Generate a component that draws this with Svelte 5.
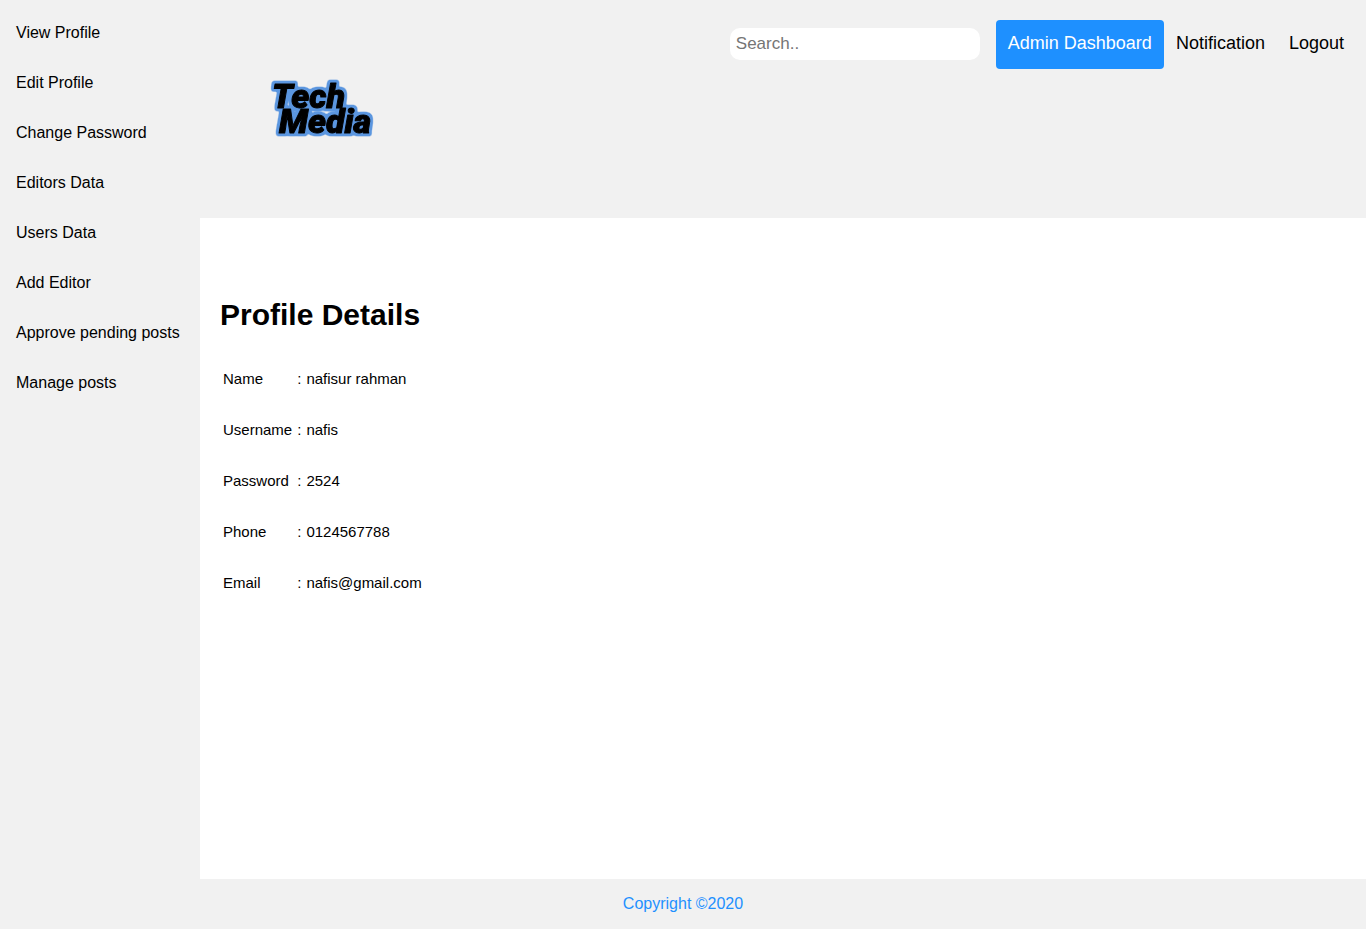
<script>
  const menu = [
    'View Profile',
    'Edit Profile',
    'Change Password',
    'Editors Data',
    'Users Data',
    'Add Editor',
    'Approve pending posts',
    'Manage posts'
  ];

  const details = [
    ['Name', 'nafisur rahman'],
    ['Username', 'nafis'],
    ['Password', '2524'],
    ['Phone', '0124567788'],
    ['Email', 'nafis@gmail.com']
  ];
</script>

<div class="page">
  <nav class="sidebar" aria-label="Profile">
    {#each menu as item}
      <a href="#top">{item}</a>
    {/each}
  </nav>

  <div class="content">
    <header>
      <a class="logo" href="#top">
        <svg width="128" height="76" viewBox="0 0 128 76">
          <defs>
            <!-- Rounded blue rim: blurred alpha, sharpened, laid under the letters -->
            <filter id="rim" x="-10%" y="-20%" width="120%" height="140%" color-interpolation-filters="sRGB">
              <feMorphology in="SourceAlpha" operator="dilate" radius="2" result="wide" />
              <feGaussianBlur in="wide" stdDeviation="1" result="soft" />
              <feComponentTransfer in="soft" result="shape">
                <feFuncA type="linear" slope="3" intercept="-0.3" />
              </feComponentTransfer>
              <feFlood flood-color="#5b96df" />
              <feComposite in2="shape" operator="in" result="blue" />
              <feMerge>
                <feMergeNode in="blue" />
                <feMergeNode in="SourceGraphic" />
              </feMerge>
            </filter>
          </defs>
          <g filter="url(#rim)">
            <text x="12" y="38">Tech</text>
            <text x="19" y="63">Media</text>
          </g>
        </svg>
      </a>
      <div class="actions">
        <input type="text" placeholder="Search.." aria-label="Search" />
        <a class="active" href="#top">Admin Dashboard</a>
        <a href="#top">Notification</a>
        <a href="#top">Logout</a>
      </div>
    </header>

    <main>
      <h1>Profile Details</h1>
      <table>
        <tbody>
          {#each details as [label, value]}
            <tr>
              <th scope="row">{label}</th>
              <td>:</td>
              <td>{value}</td>
            </tr>
          {/each}
        </tbody>
      </table>
    </main>
  </div>

  <footer>Copyright ©2020</footer>
</div>

<style>
  :global(body) {
    margin: 0;
    background: #fff;
  }

  .page {
    display: grid;
    grid-template-columns: 200px 1fr;
    grid-template-rows: 1fr auto;
    min-height: 100vh;
    color: #000;
    font-family: 'Liberation Sans', Arial, sans-serif;
    font-size: 16px;
  }

  a {
    color: #000;
    text-decoration: none;
  }

  .sidebar {
    padding-top: 8px;
    background: #f1f1f1;
  }

  .sidebar a {
    display: block;
    padding: 16px;
    line-height: 18px;
    white-space: nowrap;
  }

  header {
    box-sizing: border-box;
    display: flex;
    justify-content: space-between;
    align-items: flex-start;
    min-height: 218px;
    padding: 20px 10px;
    background: #f1f1f1;
  }

  .logo {
    margin: 50px;
  }

  .logo svg {
    display: block;
  }

  .logo text {
    font-family: Roboto, sans-serif;
    font-size: 34px;
    font-style: italic;
    font-weight: 900;
    stroke: #000;
    stroke-width: 1px;
    stroke-linejoin: round;
  }

  .actions {
    display: flex;
    align-items: flex-start;
  }

  .actions input {
    box-sizing: border-box;
    width: 250px;
    height: 32px;
    margin: 8px 16px 0 0;
    padding: 6px;
    border: none;
    border-radius: 10px;
    background: #fff;
    font-family: inherit;
    font-size: 17px;
  }

  .actions a {
    padding: 11px 12px 13px;
    border-radius: 4px;
    font-size: 18px;
    line-height: 25px;
  }

  .actions .active {
    background: dodgerblue;
    color: #fff;
  }

  main {
    padding: 80px 20px 40px;
  }

  h1 {
    margin: 0 0 20px;
    font-size: 30px;
    line-height: 34px;
  }

  table {
    border-spacing: 2px;
    font-size: 15px;
  }

  th,
  td {
    height: 47px;
    padding: 1px;
    font-weight: 400;
    text-align: left;
  }

  td {
    padding-left: 2px;
  }

  footer {
    grid-column: 1 / -1;
    padding: 16px;
    background: #f1f1f1;
    color: dodgerblue;
    line-height: 18px;
    text-align: center;
  }
</style>
